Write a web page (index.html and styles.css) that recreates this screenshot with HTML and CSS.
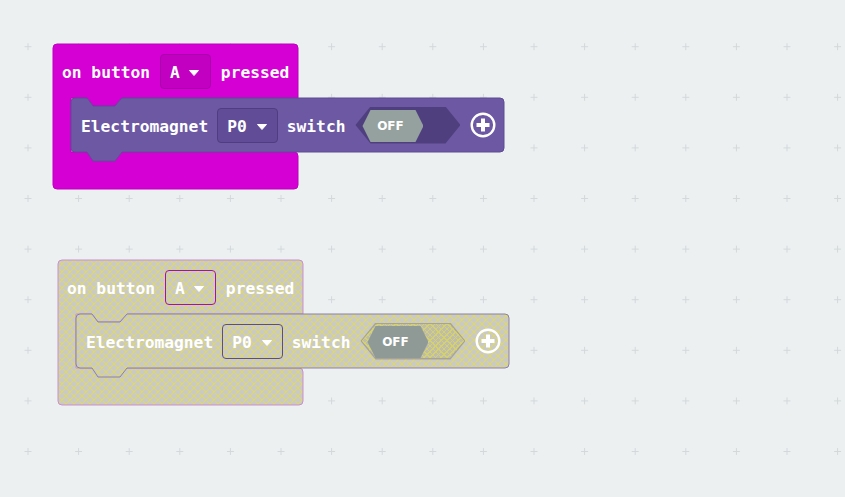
FILE: index.html
```html
<!DOCTYPE html>
<html lang="en">
<head>
  <meta charset="UTF-8">
  <meta name="viewport" content="width=device-width, initial-scale=1.0">
  <title>Blocks workspace</title>
  <link rel="stylesheet" href="styles.css">
</head>
<body>

  <main class="workspace">

    <!-- grid + shared patterns -->
    <svg class="grid" width="845" height="497">
      <defs>
        <pattern id="crosses" x="2.7" y="21.4" width="50.6" height="50.6" patternUnits="userSpaceOnUse">
          <path class="cross" d="M21.8,25.3 H28.8 M25.3,21.8 V28.8" />
        </pattern>
        <pattern id="hatch" width="8" height="8" patternUnits="userSpaceOnUse">
          <rect class="hatch-bg" width="8" height="8" />
          <path class="hatch-line" d="M0,0 L8,8 M8,0 L0,8 M-1,7 L1,9 M7,-1 L9,1 M-1,1 L1,-1 M7,9 L9,7" />
        </pattern>
      </defs>
      <rect width="845" height="497" fill="url(#crosses)" />
    </svg>

    <!-- enabled block -->
    <div class="group group-on">
      <svg class="shapes" width="452" height="146">
        <path class="event-shape" d="M4,0 H241 Q245,0 245,4 V54 H69 L62,62 H40 L34,54 H18 V108 H241 Q245,108 245,112 V141 Q245,145 241,145 H4 Q0,145 0,141 V4 Q0,0 4,0 Z" />
        <path class="stmt-shape" d="M22,54 H34 L40,62 H62 L69,54 H447 Q451,54 451,58 V104 Q451,108 447,108 H69 L62,117 H40 L34,108 H22 Q18,108 18,104 V58 Q18,54 22,54 Z" />
      </svg>
      <div class="event-head">
        <span>on button</span>
        <span class="dropdown dd-event">A
          <svg class="caret" viewBox="0 0 10 6"><path d="M0.5,0.5 H9.5 L5,5.5 Z" /></svg>
        </span>
        <span>pressed</span>
      </div>
      <div class="stmt">
        <span>Electromagnet</span>
        <span class="dropdown dd-stmt">P0
          <svg class="caret" viewBox="0 0 10 6"><path d="M0.5,0.5 H9.5 L5,5.5 Z" /></svg>
        </span>
        <span>switch</span>
        <span class="toggle"><span class="knob">OFF</span></span>
        <svg class="plus" viewBox="0 0 26 26">
          <circle cx="13" cy="13" r="11.3" />
          <path d="M13,6.5 V19.5 M6.5,13 H19.5" />
        </svg>
      </div>
    </div>

    <!-- disabled copy -->
    <div class="group group-off">
      <svg class="shapes" width="452" height="146">
        <path class="event-shape" d="M4,0 H241 Q245,0 245,4 V54 H69 L62,62 H40 L34,54 H18 V108 H241 Q245,108 245,112 V141 Q245,145 241,145 H4 Q0,145 0,141 V4 Q0,0 4,0 Z" />
        <path class="stmt-shape" d="M22,54 H34 L40,62 H62 L69,54 H447 Q451,54 451,58 V104 Q451,108 447,108 H69 L62,117 H40 L34,108 H22 Q18,108 18,104 V58 Q18,54 22,54 Z" />
      </svg>
      <div class="event-head">
        <span>on button</span>
        <span class="dropdown dd-event">A
          <svg class="caret" viewBox="0 0 10 6"><path d="M0.5,0.5 H9.5 L5,5.5 Z" /></svg>
        </span>
        <span>pressed</span>
      </div>
      <div class="stmt">
        <span>Electromagnet</span>
        <span class="dropdown dd-stmt">P0
          <svg class="caret" viewBox="0 0 10 6"><path d="M0.5,0.5 H9.5 L5,5.5 Z" /></svg>
        </span>
        <span>switch</span>
        <span class="toggle"><span class="knob">OFF</span></span>
        <svg class="plus" viewBox="0 0 26 26">
          <circle cx="13" cy="13" r="11.3" />
          <path d="M13,6.5 V19.5 M6.5,13 H19.5" />
        </svg>
      </div>
    </div>

  </main>

</body>
</html>
```

FILE: styles.css
```css
/* Workspace */
body {
  margin: 0;
  background-color: #ecf0f1;
}

.workspace {
  position: relative;
  width: 845px;
  height: 497px;
  overflow: hidden;
  background-color: #ecf0f1;
  font-family: "DejaVu Sans Mono", "Liberation Mono", monospace;
  font-weight: bold;
  font-size: 16.25px;
  color: white;
}

.grid {
  position: absolute;
  left: 0;
  top: 0;
}

.cross {
  stroke: #d3d8db;
  stroke-width: 1;
  fill: none;
}

/* Disabled blocks get a crosshatch */
.hatch-bg {
  fill: #c9c9c7;
}

.hatch-line {
  stroke: #dcd873;
  stroke-width: 1.2;
  fill: none;
}

/* Block groups sit on the canvas at their own place */
.group {
  position: absolute;
  width: 245px;
}

.group-on {
  left: 53px;
  top: 44px;
}

.group-off {
  left: 58px;
  top: 260px;
}

.shapes {
  position: absolute;
  left: 0;
  top: 0;
  overflow: visible;
}

.group-on .event-shape {
  fill: #d400d4;
  stroke: #c000c0;
  stroke-width: 1;
}

.group-on .stmt-shape {
  fill: #6d58a3;
  stroke: #5f4b94;
  stroke-width: 1;
}

.group-off .event-shape {
  fill: url(#hatch);
  stroke: #c98fd0;
  stroke-width: 1;
}

.group-off .stmt-shape {
  fill: url(#hatch);
  stroke: #8d80a6;
  stroke-width: 1;
}

/* Rows */
.event-head {
  position: relative;
  box-sizing: border-box;
  height: 54px;
  padding: 3px 0 0 9px;
  display: flex;
  align-items: center;
  gap: 10px;
  white-space: nowrap;
}

.stmt {
  position: relative;
  box-sizing: border-box;
  width: 433px;
  height: 54px;
  margin-left: 18px;
  padding: 3px 0 0 10px;
  display: flex;
  align-items: center;
  gap: 9px;
  white-space: nowrap;
}

/* Dropdown fields */
.dropdown {
  box-sizing: border-box;
  height: 35px;
  margin-top: -3px;
  padding: 3px 11px 0 9px;
  display: flex;
  align-items: center;
  gap: 9px;
  border: 1px solid;
  border-radius: 4px;
}

.dd-event {
  background-color: #c200c2;
  border-color: #a900a9;
}

.dd-stmt {
  padding-right: 10px;
  gap: 10px;
  background-color: #614c97;
  border-color: #4f3d80;
}

.group-off .dd-event {
  background-color: transparent;
  border-color: #a70fa6;
}

.group-off .dd-stmt {
  background-color: transparent;
  border-color: #5d4d85;
}

.caret {
  flex-shrink: 0;
  width: 10px;
  height: 6px;
}

.caret path {
  fill: white;
  stroke: white;
  stroke-width: 1;
  stroke-linejoin: round;
}

/* On/off toggle */
.toggle {
  position: relative;
  flex-shrink: 0;
  width: 105px;
  height: 37px;
  margin-top: -3px;
  margin-left: 1px;
  display: flex;
  align-items: center;
  padding-left: 7px;
  box-sizing: border-box;
  background-color: #503f7e;
  clip-path: polygon(0 50%, 15px 0, 90px 0, 100% 50%, 90px 100%, 15px 100%);
}

.knob {
  position: relative;
  z-index: 1;
  width: 61px;
  height: 32px;
  margin-top: 2px;
  display: flex;
  align-items: center;
  justify-content: center;
  padding-right: 5px;
  box-sizing: border-box;
  background-color: #94a19e;
  clip-path: polygon(0 50%, 8px 0, 53px 0, 100% 50%, 53px 100%, 8px 100%);
  font-family: "DejaVu Sans", sans-serif;
  font-size: 12px;
}

.group-off .toggle {
  background-color: #a7a396;
}

.group-off .toggle::before {
  content: "";
  position: absolute;
  inset: 1.5px;
  background-color: #bdbcae;
  background-image:
    repeating-linear-gradient(45deg, #d5d26c 0 1px, transparent 1px 4px),
    repeating-linear-gradient(-45deg, #d5d26c 0 1px, transparent 1px 4px);
  clip-path: polygon(0 50%, 14px 0, calc(100% - 14px) 0, 100% 50%, calc(100% - 14px) 100%, 14px 100%);
}

.group-off .knob {
  background-color: #8f9a96;
}

/* Expand button */
.plus {
  flex-shrink: 0;
  width: 26px;
  height: 26px;
  margin-top: -3px;
  margin-left: 1px;
}

.plus circle {
  fill: none;
  stroke: white;
  stroke-width: 2.4;
}

.plus path {
  stroke: white;
  stroke-width: 4;
}
```
